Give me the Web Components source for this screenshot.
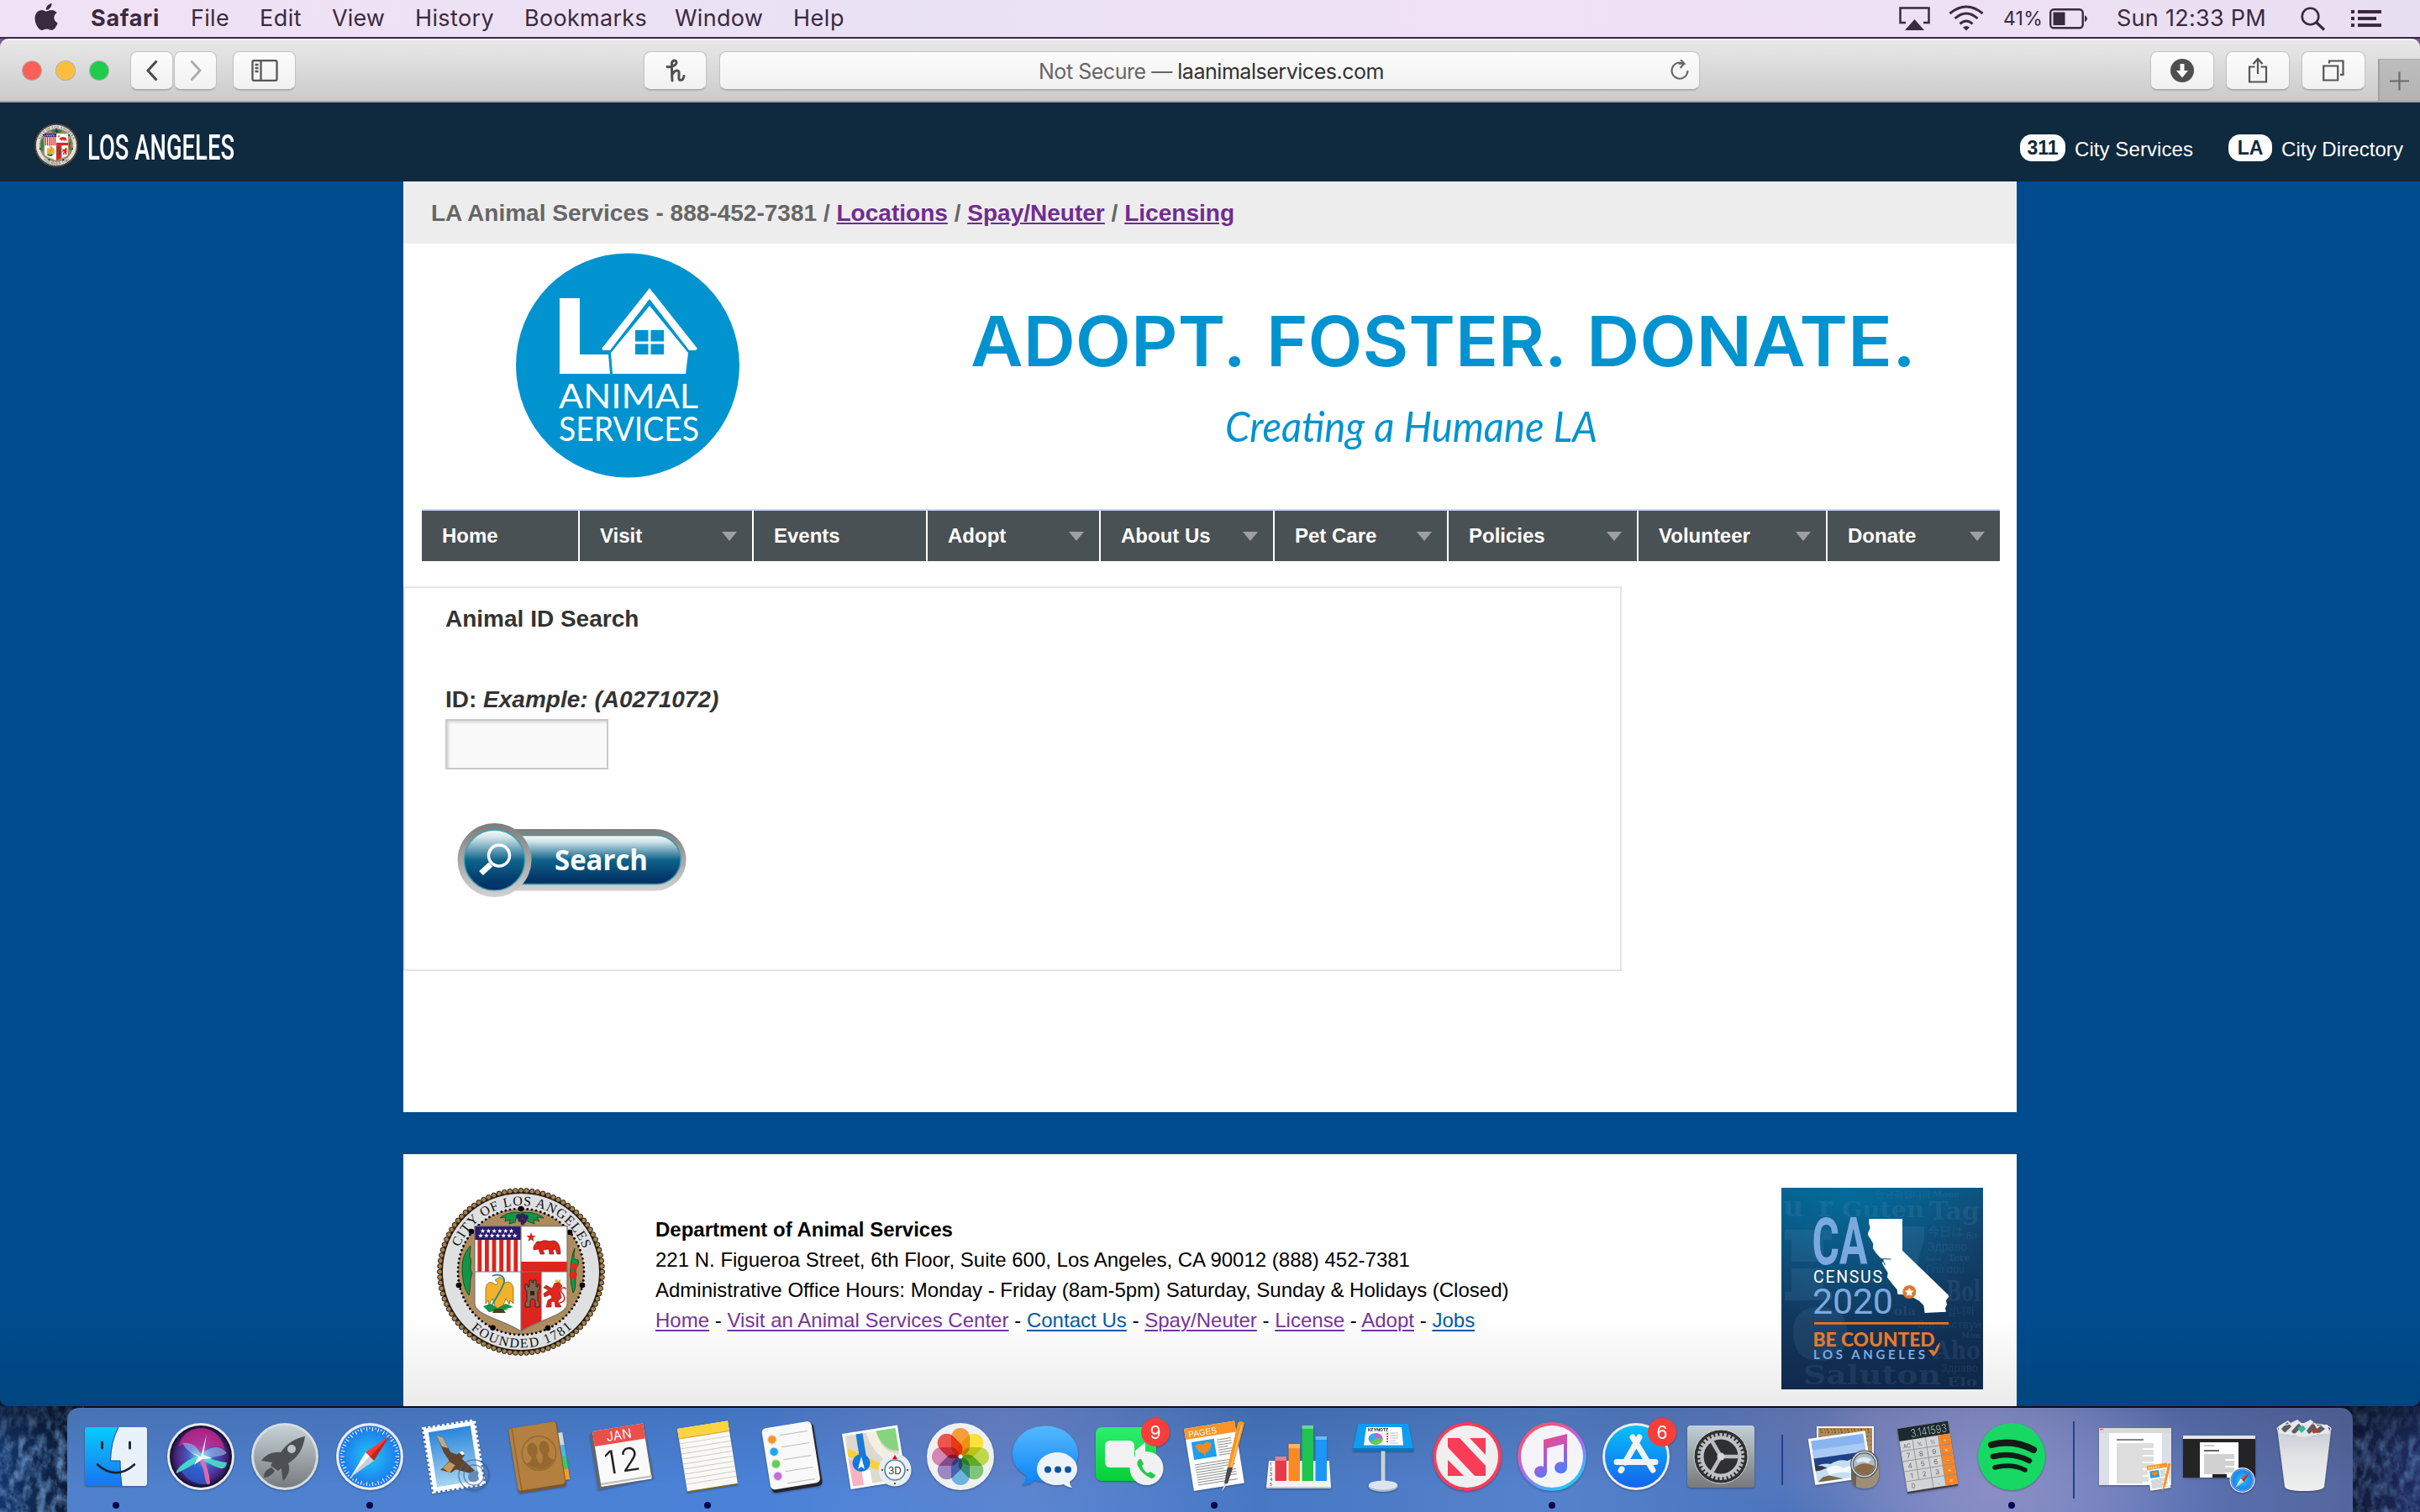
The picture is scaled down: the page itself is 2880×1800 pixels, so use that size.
<!DOCTYPE html>
<html lang="en">
<head>
<meta charset="utf-8">
<title>LA Animal Services</title>
<style>
html,body{margin:0;padding:0}
body{width:2880px;height:1800px;overflow:hidden;background:#0b1830;font-family:"Liberation Sans",Arial,sans-serif}
</style>
</head>
<body>
<mac-desktop></mac-desktop>
<script>
const define=(name,html,after)=>customElements.define(name,class extends HTMLElement{
  connectedCallback(){
    if(this.shadowRoot)return;
    this.attachShadow({mode:'open'}).innerHTML=typeof html==='function'?html(this):html;
    if(after)after(this);
  }
});

/* Text run set to an exact width, by tracking or by horizontal scale */
define('fit-text',`<style>:host{display:inline-block;white-space:pre;flex:none}span{display:inline-block;transform-origin:0 50%}</style><span><slot></slot></span>`,el=>{
  const w=+el.getAttribute('w'),s=el.shadowRoot.querySelector('span'),nat=s.getBoundingClientRect().width;
  if(el.getAttribute('mode')==='scale')s.style.transform=`scaleX(${w/nat})`;
  else s.style.letterSpacing=((w-nat)/el.textContent.length)+'px';
  el.style.width=w+'px';
});

/* ---------- City seal ---------- */
define('city-seal',()=>{
  const pt=(r,a)=>[100+r*Math.cos(a),100+r*Math.sin(a)].map(v=>v.toFixed(1));
  let beads='',dots='',stripes='',stars='';
  for(let i=0;i<92;i++){const[x,y]=pt(96.6,i*Math.PI*2/92);beads+=`<circle cx="${x}" cy="${y}" r="2.9"/>`}
  for(let i=0;i<90;i++){const[x,y]=pt(75,i*Math.PI*2/90);dots+=`<circle cx="${x}" cy="${y}" r="1.4"/>`}
  for(let i=0;i<6;i++)stripes+=`<rect x="${48.4+i*8.6}" y="62" width="4.8" height="38"/>`;
  const star=(x,y,r)=>{let p='';for(let i=0;i<10;i++){const q=i%2?r*.42:r,a=-Math.PI/2+i*Math.PI/5;p+=(x+q*Math.cos(a)).toFixed(1)+','+(y+q*Math.sin(a)).toFixed(1)+' '}return `<polygon points="${p}"/>`};
  for(let i=0;i<6;i++)stars+=star(54.5+i*6.8,51.5,3);
  for(let i=0;i<7;i++)stars+=star(52+i*6.8,57,3);
  const big=[[100,25],[41,52],[158,53],[26,116],[173,116],[66.5,166.7],[132,167]].map(([x,y])=>`<circle cx="${x}" cy="${y}" r="3.3"/>`).join('');
  return `<style>:host{display:block;flex:none}svg{display:block;width:100%;height:100%}</style>
<svg viewBox="0 0 200 200"><defs><path id="t" d="M21 100A79 79 0 0 1 179 100"/><path id="b" d="M9.500 100A90.500 90.500 0 0 0 190.500 100"/><clipPath id="s"><path d="M45 45.700H155V138C155 152 118 158 100 171C82 158 45 152 45 138Z"/></clipPath></defs>
<circle cx="100" cy="100" r="95.500" fill="#221a10"/><g fill="#a8824f" stroke="#1f1810" stroke-width="1">${beads}</g>
<circle cx="100" cy="100" r="93" fill="#dfe0e2"/><circle cx="100" cy="100" r="75" fill="#ae8b5d"/>${dots}${big}
<g fill="#149447" stroke="#0b3d20" stroke-width=".8"><path d="M75 36C82 30 92 28 100 30C108 28 120 30 127 36L119 35L122 40L115 38L116 43L108 40L106 36H94L93 41L86 43L87 38L81 40L82 35Z"/><path d="M40 69C31 78 28 92 31 108C32 118 35 124 38 128C41 118 38 110 42 102C37 95 43 88 39 82Z"/><path d="M164 72C158 86 157 108 162 125C167 118 163 112 166 103C162 96 171 92 168 86C161 86 163 80 164 72Z"/></g>
<g fill="#37226d" stroke="#160c35" stroke-width=".5"><circle cx="97" cy="34" r="2.500"/><circle cx="102" cy="33" r="2.500"/><circle cx="106" cy="35" r="2.500"/><circle cx="99" cy="38" r="2.500"/><circle cx="104" cy="39" r="2.500"/><circle cx="102" cy="42" r="2.200"/></g>
<circle cx="163" cy="94" r="4" fill="#e0261e"/><circle cx="162" cy="104" r="4.500" fill="#e0261e"/>
<g clip-path="url(#s)"><rect x="40" y="40" width="120" height="135" fill="#fff"/><rect x="45" y="45" width="55" height="17" fill="#2b1b6c"/><g fill="#dd241d">${stripes}<rect x="100" y="88" width="56" height="12"/><rect x="100" y="100" width="24.500" height="72"/></g><g fill="#fff">${stars}</g></g>
<g fill="none" stroke="#777" stroke-width="1.200"><path d="M45 45.700H155V138C155 152 118 158 100 171C82 158 45 152 45 138Z"/><path d="M100 46V170M45 100H155"/></g>
<g fill="#dd241d">${star(112,59,6)}<path stroke="#5a1512" stroke-width=".6" d="M115 70L119 64L124 64C129 61 133 65 138 63C144 63 147 69 147 79H143L141 73L138 74L139 79H134L133 73L126 74L128 79H123L121 73L115 74Z"/></g>
<path fill="#f3b229" stroke="#7a5310" stroke-width=".7" d="M69 110L75 106L80 110L79 115C84 109 90 113 91 120V138L87 134L86 139L82 132L79 140L84 145H66L69 140L66 132L62 139L61 134L58 138V120C59 112 65 110 70 116L73 113Z"/><path d="M66 105C76 101 83 107 79 115C76 123 73 126 66 139" fill="none" stroke="#1a8a98" stroke-width="1.800"/><path fill="#149447" d="M55 141L64 138L72 143L82 138L91 142L82 144L78 148L68 147L62 148Z"/><path fill="#503b1e" d="M66 149L69 144H78L82 149Z"/>
<path fill="#7d6853" stroke="#2c2118" stroke-width=".9" d="M105 142V137L107 135V123L105 121V115H108V118H110V110H113V113H115V110H118V118H120V115H122V121L120 123V135L122 137V142H117V134Q114 130 111 134V142Z"/><path d="M111 123v5h5v-5z" fill="#2c2118"/>
<path fill="#e0261e" stroke="#6c1310" stroke-width=".6" d="M140 114L145 112L149 117L146 121L148 131L144 135L148 142H141L140 135L136 136V142H130L132 134L137 131L135 127L128 130L127 126L133 122L127 119L130 116L137 120Z"/><path d="M146 137C156 135 151 127 148 124C146 119 153 117 153 121" fill="none" stroke="#e0261e" stroke-width="1.600"/><path d="M140 112l2-3 2 2 3-2v4z" fill="#e6b12e"/>
<g font-family="Liberation Serif,Times New Roman,serif" font-size="16" fill="#111"><text><textPath href="#t" startOffset="30" textLength="190" lengthAdjust="spacing">CITY OF LOS ANGELES</textPath></text><text><textPath href="#b" startOffset="77" textLength="132" lengthAdjust="spacing">FOUNDED 1781</textPath></text></g></svg>`});

/* ---------- macOS menu bar ---------- */
define('menu-bar',`<style>
:host{display:flex;box-sizing:border-box;height:46px;padding-left:41px;background:linear-gradient(90deg,#f1e1f4,#e9e2f4 38%,#f0e1f4 60%,#eee1f3 80%,#e8def2);border-bottom:2px solid #3b2545;color:#3a2a3f;font:27px/44px Inter,sans-serif}
svg{flex:none;display:block}b{font-weight:700}.sp{flex:1}fit-text{margin-right:var(--g)}
.small{font-size:23px}
</style>
<svg width="28" height="44" viewBox="0 0 28 44" style="margin-right:39px"><path fill="#3a2a3f" d="M20.500 4C20.900 8 17.500 12 13.800 11.800C13.500 8.200 16.700 4.400 20.500 4ZM14 13.600C15.500 13.600 17.800 11.800 20.700 12C23.200 12.200 25.300 13.300 26.700 15.300C21.800 18.300 22.500 25.200 27.600 27.400C26.300 31 23.600 35.700 20.700 35.800C18.400 35.900 17.500 34.400 14.600 34.400C11.700 34.400 10.800 35.800 8.600 35.900C5.500 36 .5 28.600 .5 22C.5 15.500 4.700 12.200 8.600 12.100C11 12.100 12.800 13.600 14 13.600Z"/></svg>
<fit-text w="82" style="--g:37px"><b>Safari</b></fit-text><fit-text w="46" style="--g:36px">File</fit-text><fit-text w="50" style="--g:36px">Edit</fit-text><fit-text w="63" style="--g:36px">View</fit-text><fit-text w="94" style="--g:36px">History</fit-text><fit-text w="146" style="--g:33px">Bookmarks</fit-text><fit-text w="105" style="--g:36px">Window</fit-text><fit-text w="61" style="--g:0">Help</fit-text>
<span class="sp"></span>
<svg width="37" height="44" viewBox="0 0 37 44" style="margin-right:22px"><path d="M8 27H1.500V9.500H35.500V27H29" fill="none" stroke="#3a2a3f" stroke-width="2.500"/><path d="M18.500 23L30 36H7Z" fill="#3a2a3f"/></svg>
<svg width="42" height="44" viewBox="0 0 42 44" style="margin-right:23px"><g fill="none" stroke="#3a2a3f" stroke-width="3"><path d="M1.500 16Q21 0 40.500 16M7.500 22Q21 10 34.500 22M13.500 28.500Q21 21.500 28.500 28.500"/></g><path d="M17 32.500Q21 29.500 25 32.500L21 36.500Z" fill="#3a2a3f"/></svg>
<fit-text class="small" w="47" style="--g:8px">41%</fit-text>
<svg width="46" height="44" viewBox="0 0 46 44" style="margin-right:34px"><rect x="1.200" y="11.200" width="38.500" height="22" rx="4" fill="none" stroke="#3a2a3f" stroke-width="2.400"/><path d="M4.500 14.500h14v15.500h-14z" fill="#3a2a3f"/><path d="M42 18Q48 22 42 26.500Z" fill="#3a2a3f"/></svg>
<fit-text w="178" style="--g:41px">Sun 12:33 PM</fit-text>
<svg width="30" height="44" viewBox="0 0 30 44" style="margin-right:30px"><circle cx="11.500" cy="19.500" r="9.800" fill="none" stroke="#3a2a3f" stroke-width="2.600"/><path d="M18.500 26.500L28 35.500" stroke="#3a2a3f" stroke-width="3.200"/></svg>
<svg width="36" height="44" viewBox="0 0 36 44" style="margin-right:46px"><path fill="#3a2a3f" d="M0 12h4v4H0zM8 12h28v4H8zM0 20h4v4H0zM8 20h22v4H8zM0 28h4v4H0zM8 28h28v4H8z"/></svg>`);

/* ---------- Safari toolbar ---------- */
define('tool-button',`<style>:host{display:flex;align-items:center;justify-content:center;box-sizing:border-box;height:46px;flex:none;border-radius:8px;background:linear-gradient(#fcfcfc,#f1f1f1);border:1px solid #c4c4c4;border-bottom-color:#a6a6a6;box-shadow:0 1px 1px #0002}</style><slot></slot>`);
define('browser-toolbar',`<style>
:host{display:flex;box-sizing:border-box;height:76px;padding:13px 0 0 26px;background:linear-gradient(#e8e8e8,#cbcbcb);border-top:2px solid #f4f4f4;border-bottom:2px solid #a3a3a3;border-radius:10px 10px 0 0;font:25px/44px Inter,sans-serif}
i{width:22px;height:22px;margin:11px 16px 0 0;border-radius:50%;border:1px solid #0003;flex:none;background-clip:padding-box}
svg{display:block}.addr{position:relative;color:#666}.addr b{font-weight:400;color:#333}
.reload{position:absolute;right:10px;top:9px}
.tab{width:50px;height:50px;margin:9px 0 0 15px;background:linear-gradient(#bdbdbd,#b3b3b3);border-left:2px solid #a0a0a0;border-top:1px solid #a8a8a8;box-sizing:border-box}
</style>
<i style="background-color:#ff5f57"></i><i style="background-color:#ffbf3c"></i><i style="background-color:#1fcc4c"></i>
<tool-button style="width:51px;margin-left:9px"><svg width="16" height="26"><path d="M13.500 1.500L3 13L13.500 24.500" fill="none" stroke="#4a4a4a" stroke-width="3"/></svg></tool-button>
<tool-button style="width:51px;margin-left:1px"><svg width="16" height="26"><path d="M2.500 1.500L13 13L2.500 24.500" fill="none" stroke="#ababab" stroke-width="2.800"/></svg></tool-button>
<tool-button style="width:75px;margin-left:19px"><svg width="32" height="26"><path d="M3 1.200H29Q30.500 1.200 30.500 3V23Q30.500 24.800 29 24.800H3Q1.500 24.800 1.500 23V3Q1.500 1.200 3 1.200ZM11.500 1V25M4.500 6H8.500M4.500 10H8.500M4.500 14H8.500" fill="none" stroke="#555" stroke-width="2.300"/></svg></tool-button>
<tool-button style="width:75px;margin-left:414px"><svg width="26" height="28" viewBox="0 0 26 28"><path d="M3 9.500C8 10.500 14.500 7.500 14 4C13.500 .5 8.500 1.500 8.500 6C8.500 13 8.500 19 9 26M9.500 18C12 13.500 16.500 12.500 17 16C17.500 19.500 15.500 25.500 19 25.500C21 25.500 22.500 23.500 23 20.500" fill="none" stroke="#505050" stroke-width="3" stroke-linecap="round"/></svg></tool-button>
<tool-button class="addr" style="width:1167px;margin-left:15px"><fit-text w="411" style="margin:2px 0 0 4px"><span>Not Secure — </span><b>laanimalservices.com</b></fit-text><svg class="reload" width="26" height="26"><path d="M17 4.500A9.500 9.500 0 1 0 22.500 13" fill="none" stroke="#666" stroke-width="2"/><path d="M11.500 4.800H18.500L13.500 -1M18.500 4.500L13.500 10" fill="none" stroke="#666" stroke-width="2"/></svg></tool-button>
<tool-button style="width:76px;margin-left:536px"><svg width="28" height="28"><circle cx="14" cy="14" r="14" fill="#4f4f4f"/><path d="M11.500 6h5v8h4.500L14 22.500L7 14h4.500z" fill="#fafafa"/></svg></tool-button>
<tool-button style="width:76px;margin-left:14px"><svg width="24" height="32"><path d="M8.500 11.500H2V29.500H22V11.500H15.500M12 20V3M6.500 8.200L12 2L17.500 8.200" fill="none" stroke="#555" stroke-width="2.200"/></svg></tool-button>
<tool-button style="width:76px;margin-left:14px"><svg width="26" height="26"><path d="M1.200 7.500h17v17h-17zM8 4.500V1.500H24.500V17.800H21" fill="none" stroke="#555" stroke-width="2.200"/></svg></tool-button>
<div class="tab"><svg width="48" height="49"><path d="M12 25.500H35M23.500 14.500V36.500" stroke="#6b6b6b" stroke-width="2.200"/></svg></div>`);

/* ---------- City header ---------- */
define('city-header',`<style>
:host{display:flex;height:94px;padding-left:41px;background:#0f293e;color:#fff;box-sizing:border-box;font-size:24px;line-height:32px}
city-seal{width:52px;height:52px;margin-top:25px}
.la{font:500 43px/94px Roboto,sans-serif;margin:6px 0 0 11px}
.links{margin-left:auto;display:flex;padding:38px 20px 0 0}
.badge{height:32px;border-radius:14px;background:#fff;color:#0f293e;font-weight:700;font-size:23px;text-align:center}
.t{margin:2px 42px 0 11px}.t:last-child{margin-right:0}
</style><city-seal></city-seal><fit-text class="la" w="175" mode="scale">LOS ANGELES</fit-text>
<div class="links"><span class="badge" style="width:54px">311</span><fit-text class="t" w="141">City Services</fit-text><span class="badge" style="width:52px">LA</span><fit-text class="t" w="145">City Directory</fit-text></div>`);

define('utility-bar',`<style>:host{display:block;box-sizing:border-box;height:74px;background:#ededed;color:#666;font:bold 28px/74px "Liberation Sans",Arial,sans-serif;padding:1px 0 0 33px}a{color:#702c91;text-decoration:underline}</style><fit-text w="956">LA Animal Services - 888-452-7381 / <a>Locations</a> / <a>Spay/Neuter</a> / <a>Licensing</a></fit-text>`);

define('site-banner',`<style>
:host{display:flex;height:316px;color:#0093d0}
.logo{margin:11px 0 0 134px;flex:none;display:block}
.copy{margin-left:274px;padding-top:66px}
.h{display:flex;font:600 83px/100px Inter,sans-serif}
.s{font:italic 50px/60px Lato,sans-serif;margin:21px 0 0 303px}
</style>
<svg class="logo" width="267" height="268" viewBox="0 0 267 268"><ellipse cx="133" cy="134" rx="133" ry="133.500" fill="#0093d0"/><g fill="#fff"><path d="M52 54H76V121H110L112 144H52Z"/><path d="M159 42L216 114L214 116H206L159 55L112 116H104L102 114Z"/><path d="M159 63L205 119L202 144H115L113 119Z"/></g><path fill="#0093d0" d="M142 92h15.500v13.500H142zM160.500 92H176v13.500h-15.500zM142 108.500h15.500V121H142zM160.500 108.500H176V121h-15.500z"/><g fill="#fff" font-family="Lato,sans-serif" font-size="40.500"><text x="51" y="185" textLength="166" lengthAdjust="spacingAndGlyphs">ANIMAL</text><text x="51" y="224" textLength="167" lengthAdjust="spacingAndGlyphs">SERVICES</text></g></svg>
<div class="copy"><div class="h"><fit-text w="328" mode="scale">ADOPT.</fit-text><fit-text w="358" mode="scale" style="margin-left:24px">FOSTER.</fit-text><fit-text w="392" mode="scale" style="margin-left:23px">DONATE.</fit-text></div>
<fit-text class="s" w="443" mode="scale">Creating a Humane LA</fit-text></div>`);

define('nav-item',el=>`<style>:host{display:flex;align-items:center;box-sizing:border-box;flex:none;padding:0 18px 0 24px;background:#4a5154;justify-content:space-between;color:#fff;font:bold 24px/60px "Liberation Sans",Arial,sans-serif}svg{display:block}</style><slot></slot>${el.hasAttribute('menu')?'<svg width="18" height="11"><path d="M0 0H18L9 11Z" fill="#9da0a1"/></svg>':''}`);
define('site-nav',()=>{
  const items=[['Home',186,0],['Visit',205,1],['Events',205,0],['Adopt',204,1],['About Us',205,1],['Pet Care',205,1],['Policies',224,1],['Volunteer',223,1],['Donate',205,1]];
  return `<style>:host{display:flex;gap:2px;margin:0 20px 0 22px;border-top:2px solid #c8d6f7;height:60px}</style>`+items.map(([t,w,m])=>`<nav-item style="width:${w}px"${m?' menu':''}>${t}</nav-item>`).join('');
});

define('search-button',`<style>:host{display:block;width:274px;height:90px}svg{display:block}</style><svg width="274" height="90" viewBox="0 0 274 90"><defs><linearGradient id="o" x2="0" y2="1"><stop stop-color="#7c7c7c"/><stop offset="1" stop-color="#d2d2d2"/></linearGradient><linearGradient id="i" x2="0" y2="1"><stop stop-color="#f6fbfc"/><stop offset=".12" stop-color="#d3e6ea"/><stop offset=".5" stop-color="#0f648b"/><stop offset=".85" stop-color="#033a6b"/><stop offset="1" stop-color="#022f63"/></linearGradient></defs>
<rect x="20" y="8" width="252.500" height="73.500" rx="36.500" fill="url(#o)"/><rect x="30" y="15.500" width="236" height="58" rx="29" fill="url(#i)" stroke="#3798ac" stroke-width="1.500"/><circle cx="44.500" cy="45" r="44" fill="url(#o)"/><circle cx="44.500" cy="45" r="36" fill="url(#i)" stroke="#3ba0b2" stroke-width="1.500"/><circle cx="50" cy="39.500" r="12.500" fill="none" stroke="#fff" stroke-width="3.500"/><path d="M40 50L28.500 60.500" stroke="#fff" stroke-width="7"/><text x="116" y="56.500" fill="#fff" font-family="Open Sans,sans-serif" font-weight="700" font-size="34" textLength="111" lengthAdjust="spacingAndGlyphs">Search</text></svg>`);

define('search-panel',`<style>:host{display:block;box-sizing:border-box;width:1450px;height:458px;margin-top:30px;border:2px solid #e5e5e5;padding:17px 48px;color:#333;font:bold 28px/40px "Liberation Sans",Arial,sans-serif}
h2,p{margin:0;font:inherit}p{margin-top:56px}input{display:block;box-sizing:border-box;width:194px;height:60px;margin-top:3px;border:2px solid #c9c9c9;background:#f9f9f9;border-radius:0;box-shadow:inset 2px 2px 3px #0002;outline:0}search-button{margin:63px 0 0 14px}</style>
<h2>Animal ID Search</h2><p>ID: <em>Example: (A0271072)</em></p><input><search-button></search-button>`);

define('census-card',`<style>:host{display:block;width:240px;height:240px;flex:none}svg{display:block}</style><svg width="240" height="240" viewBox="0 0 240 240"><defs><linearGradient id="g" x2=".15" y2="1"><stop stop-color="#075e8b"/><stop offset=".35" stop-color="#12436d"/><stop offset="1" stop-color="#10294b"/></linearGradient><radialGradient id="h" cx=".35" cy="0" r=".7"><stop stop-color="#0273a3" stop-opacity=".7"/><stop offset="1" stop-color="#0273a3" stop-opacity="0"/></radialGradient></defs><rect width="240" height="240" fill="url(#g)"/><rect width="240" height="240" fill="url(#h)"/>
<g fill="#7fb0d8" opacity=".11" font-family="DejaVu Serif,serif" font-weight="bold"><path d="M4 50H60V62H50V88H12V62H4ZM12 96H50V124H60V134H4V124H12ZM132 46H170V60L160 96H146L140 60ZM14 172Q14 142 46 142Q78 142 78 172Q78 206 46 206Q14 206 14 172Z"/><text x="2" y="34" font-size="34" textLength="60">ur</text><text x="72" y="35" font-size="26" textLength="98" lengthAdjust="spacingAndGlyphs">Guten</text><text x="176" y="38" font-size="29" textLength="60" lengthAdjust="spacingAndGlyphs">Tag</text><text x="180" y="11" font-size="10" textLength="32" lengthAdjust="spacingAndGlyphs">Mono</text><text x="196" y="135" font-size="34" textLength="41" lengthAdjust="spacingAndGlyphs">Bol</text><text x="134" y="152" font-size="14" textLength="26" lengthAdjust="spacingAndGlyphs">ola</text><text x="182" y="204" font-size="30" textLength="55" lengthAdjust="spacingAndGlyphs">Aho</text><text x="26" y="234" font-size="32" textLength="164" lengthAdjust="spacingAndGlyphs">Saluton</text><text x="197" y="236" font-size="14" textLength="36" lengthAdjust="spacingAndGlyphs">Elo</text><g font-weight="400" font-family="Liberation Sans,Noto Sans CJK JP,Noto Sans CJK KR,sans-serif"><text x="174" y="57" font-size="14">今日は</text><text x="220" y="61" font-size="10">Віт</text><text x="174" y="75" font-size="14">Здраво</text><text x="172" y="101" font-size="12">Γειά σου</text><text x="197" y="152" font-size="12">십니까</text><text x="162" y="167" font-size="12" textLength="76" lengthAdjust="spacingAndGlyphs">Здравствуй</text><text x="190" y="219" font-size="13">Здраво</text><text x="112" y="12" font-size="10" textLength="66" lengthAdjust="spacingAndGlyphs">안녕하십니까</text></g><text x="198" y="87" font-size="11">Tere</text><text x="172" y="87" font-size="6.500">Salut</text><text x="214" y="179" font-size="9" textLength="23" lengthAdjust="spacingAndGlyphs">Mon</text></g>
<g fill="#7ba9df"><text x="36.500" y="91" font-family="Roboto,sans-serif" font-weight="700" font-size="77" textLength="66" lengthAdjust="spacingAndGlyphs">CA</text><text x="37" y="150" font-family="Roboto,sans-serif" font-size="43" textLength="96">2020</text><text x="38" y="204" font-family="Lato,sans-serif" font-weight="700" font-size="15" textLength="133">LOS ANGELES</text></g>
<text x="38" y="113" fill="#fff" font-family="Roboto,sans-serif" font-size="19.500" textLength="82">CENSUS</text><rect x="39" y="160" width="160" height="2.700" fill="#e2782a"/><text x="37.500" y="188.500" fill="#e47a2b" font-family="Lato,sans-serif" font-weight="900" font-size="22" textLength="145" lengthAdjust="spacingAndGlyphs">BE COUNTED</text><path d="M175 193L181 193L182 196Q184 188 189 184Q187 195 181 201Z" fill="#e47a2b"/>
<g transform="scale(.3333) translate(-120 -102)"><path fill="#fff" d="M433 213H552V326L715 484L718 491L708 504L711 520L705 532L708 545L632 549L628 522L612 506L598 498L580 490L556 484L535 482L533 466L518 448L498 422L500 405L488 386L480 372L485 358L473 352L458 335L447 318L448 302L438 284L430 274L429 264L437 245L433 230Z"/><path d="M481 356l30 1M482 360l8 18" stroke="#204565" stroke-width="3"/><circle cx="577" cy="474" r="24" fill="#e2782a"/><path fill="#fff" d="M577 459l5 10 11 1-8 8 2 11-10-5-10 5 2-11-8-8 11-1z"/></g></svg>`);

define('site-footer',`<style>:host{display:flex;align-items:flex-start;box-sizing:border-box;height:300px;padding:40px 40px 0;background:linear-gradient(#fff 0,#fff 65%,#ebebeb);color:#000;font:24px/36px "Liberation Sans",Arial,sans-serif}
city-seal{width:200px;height:200px}.txt{margin:32px 0 0 60px;flex:1;white-space:nowrap}.txt div{height:36px}.lk{letter-spacing:.02px}a{color:#75359a;text-decoration:underline;text-underline-offset:3px;text-decoration-thickness:1.500px}a.n{color:#0059a8}</style>
<city-seal></city-seal><div class="txt"><div><b>Department of Animal Services</b></div><div>221 N. Figueroa Street, 6th Floor, Suite 600, Los Angeles, CA 90012 (888) 452-7381</div><div>Administrative Office Hours: Monday - Friday (8am-5pm) Saturday, Sunday &amp; Holidays (Closed)</div><div class="lk"><a>Home</a> - <a>Visit an Animal Services Center</a> - <a class="n">Contact Us</a> - <a>Spay/Neuter</a> - <a>License</a> - <a>Adopt</a> - <a class="n">Jobs</a></div></div><census-card></census-card>`);

define('web-page',`<style>:host{display:block;height:1552px;background:#004b8d;border-radius:0 0 10px 10px;overflow:hidden}main,site-footer{width:1920px;margin:0 auto}main{background:#fff;height:1108px}.gap{height:50px}.f{height:300px;background:linear-gradient(#004b8d 65%,#00457f)}</style>
<city-header></city-header><main><utility-bar></utility-bar><site-banner></site-banner><site-nav></site-nav><search-panel></search-panel></main><div class="gap"></div><div class="f"><site-footer></site-footer></div>`);

/* ---------- Dock ---------- */
const compass=(x,y,r)=>{let t='';for(let i=0;i<60;i++){const a=i*Math.PI/30,q=i%2?.82:.76;t+=`M${(x+r*.88*Math.cos(a)).toFixed(1)} ${(y+r*.88*Math.sin(a)).toFixed(1)}L${(x+r*q*Math.cos(a)).toFixed(1)} ${(y+r*q*Math.sin(a)).toFixed(1)}`}
return `<circle cx="${x}" cy="${y}" r="${r}" fill="#ececec"/><circle cx="${x}" cy="${y}" r="${r*.92}" fill="url(#sf)"/><path d="${t}" stroke="#fff" stroke-width="${r/38}"/><g transform="translate(${x} ${y}) scale(${r/40})"><path d="M24-25L-5-5L0 0Z" fill="#ff3b30"/><path d="M24-25L5 5L0 0Z" fill="#c9201b"/><path d="M-23 25L-5-5L0 0Z" fill="#fff"/><path d="M-23 25L5 5L0 0Z" fill="#c9cfd3"/></g>`};
const lines=(x,y,w,n,s,c,sw)=>{let d='';for(let i=0;i<n;i++)d+=`M${x} ${y+i*s}h${(i%4==3?w*.7:w)}`;return `<path d="${d}" stroke="${c}" stroke-width="${sw}"/>`};
const skew=(h,x=14,y=25)=>`<g transform="matrix(1 -.16 .16 1 ${x} ${y})">${h}</g>`;
const miniPages=`<rect width="60" height="74" fill="#fff"/><rect width="60" height="13" fill="#fb9427"/><text x="4" y="11" font-size="10" fill="#fff" font-family="Liberation Sans,sans-serif">PAGES</text><rect x="6" y="17" width="27" height="21" fill="#1ba0ee"/><path d="M10 22Q14 18 19 22Q24 17 29 22Q27 31 21 32L20 37L18 32Q12 30 10 22Z" fill="#f4881d"/>${lines(36,19,17,7,3,'#8b8b8b',1)}${lines(6,44,47,9,3,'#8b8b8b',1)}`;
const petals=['#f78f1e','#f9e01d','#b5d334','#6bbd6a','#5aa9de','#8d76bb','#ce76a8','#ee3b30'].map((c,i)=>`<rect x="39" y="24" width="22" height="33" rx="11" fill="${c}" opacity=".86" style="mix-blend-mode:multiply" transform="rotate(${i*45} 50 58)"/>`).join('');
const teeth=(()=>{let s='';for(let i=0;i<32;i++)s+=`<rect x="48.400" y="30" width="3.200" height="7" transform="rotate(${i*11.25} 50 58)"/>`;return s})();
const badge=(n,x,y)=>`<circle cx="${x}" cy="${y}" r="17" fill="#fa3d38"/><text x="${x}" y="${y+7.500}" font-size="21" text-anchor="middle" fill="#fff" font-family="Inter,sans-serif">${n}</text>`;
const calc=(()=>{let s='<rect y="1" width="60" height="76" fill="#3a3d42"/><rect width="60" height="75" fill="#d3d4d6"/><rect width="60" height="15" fill="#1b2a2e"/><text x="57.500" y="12.500" text-anchor="end" font-size="13" textLength="43" lengthAdjust="spacingAndGlyphs" fill="#b4bcbc" font-family="Inter,sans-serif" font-weight="300">3.141593</text><rect x="46" y="15" width="14" height="60" fill="#fb8524"/><path d="M0 27h60M0 39h60M0 51h60M0 63h60M15.500 15v48M31 15v60M46 15v60" stroke="#8c8e90" stroke-width=".8"/>';
const k=[['AC','%','%','÷'],['7','8','9','×'],['4','5','6','−'],['1','2','3','+'],['0','','.','=']];
k.forEach((r,j)=>r.forEach((t,i)=>{if(t)s+=`<text x="${[8,23,38.500,53][i]}" y="${24+j*12}" font-size="${j?8:6.5}" text-anchor="middle" fill="${i==3?'#ffe0c0':'#6a6a6c'}" font-family="Inter,sans-serif">${t}</text>`}));return s})();
const ICONS={
finder:`<rect x="13" y="23" width="74" height="70" rx="3" fill="url(#fb)"/><path d="M53 23H84Q87 23 87 26V90Q87 93 84 93H57Q55 80 55 63H43.500Q44 40 53 23Z" fill="#e9f1fa"/><path d="M53 23Q44 40 43.500 63H55Q55 80 57 93" fill="none" stroke="#15508f" stroke-width="1"/><path d="M33.500 41v7M66.500 41v7" stroke="#1a2a40" stroke-width="3" stroke-linecap="round"/><path d="M28 67.500Q50 87 72 67.500" fill="none" stroke="#1a2230" stroke-width="2.600" stroke-linecap="round"/>`,
siri:`<circle cx="50" cy="58" r="40" fill="#e9e9ee"/><circle cx="50" cy="58" r="37" fill="#15122f"/><circle cx="50" cy="58" r="35" fill="url(#si)"/><path d="M23 46Q30 24 52 24Q72 26 79 50Q66 40 50 54Q36 38 23 46Z" fill="#d6278a" opacity=".7"/><path d="M24 70Q34 62 50 60Q52 78 58 91Q34 92 24 70Z" fill="#2467d8" opacity=".7"/><path d="M50 56Q44 40 28 42Q34 54 50 58Q72 60 81 54Q72 42 58 50Z" fill="#a8c6f4" opacity=".55"/><path d="M50 55Q60 62 81 65Q80 75 70 71Q58 66 51 61Q38 70 21 78Q19 74 34 63Q44 58 50 55Z" fill="#4ceacb" opacity=".85"/><path d="M51 58Q60 72 61 90Q57 94 55 84Q53 70 48 62Z" fill="#f06cb4" opacity=".9"/><path d="M50 58L57 31L53 56L64 60L52 61L42 68L47 58L36 52Z" fill="#fff" opacity=".95"/>`,
launchpad:`<circle cx="50" cy="58" r="40" fill="#d7dde0"/><circle cx="50" cy="58" r="37" fill="url(#lp)"/><path d="M74 34C62 36 52 43 45 53C35 52 27 56 22 63L35 65L33 69L42 75L46 72C46 78 47 83 48 87C54 81 57 73 54 66C66 59 72 48 74 34Z" fill="#4c4f54"/><circle cx="58" cy="49" r="5" fill="#bcc4c8"/><path d="M34 71Q25 74 25 83Q34 82 38 75Z" fill="#4c4f54"/>`,
safari:compass(50,58,40),
mail:skew(`<rect width="60" height="75" fill="#fff"/><rect width="60" height="75" fill="none" stroke="#fff" stroke-width="4" stroke-dasharray="3 2.500"/><rect x="5" y="5" width="50" height="65" fill="url(#ml)"/><path d="M14 10L21 14L27 32L34 36L40 33L43 38L39 42L52 58L45 60L30 53L24 56L12 51L24 42L19 31Z" fill="#60452c"/><path d="M14 10L21 14L25 27L18 24Z" fill="#b9aa93"/><path d="M15 49l9-6 6 5-8 8z" fill="#c99a5e"/><path d="M37 34l4-1 2 4-3 1z" fill="#fff"/>`)+`<g fill="none" stroke="#40608f" opacity=".65"><circle cx="74" cy="80" r="18" stroke-width="1.500"/><circle cx="74" cy="80" r="12" stroke-width="1.500"/></g><path d="M74 76q5-3 6 2-3 3 0 6-4 6-7 4-5 1-6-6 1-7 7-6z" fill="#4a6f9f" opacity=".7"/>`,
contacts:`<g transform="matrix(1 -.16 .16 1 14 25)"><rect x="52" y="14" width="10" height="15" fill="#d2d6dc"/><rect x="52" y="29" width="10" height="14" fill="#4cb6e4"/><rect x="52" y="43" width="10" height="14" fill="#3ccb5a"/><rect x="52" y="57" width="10" height="13" fill="#f7a024"/><rect width="57" height="77" rx="3" fill="#7e5528"/><rect width="56" height="74" rx="3" fill="#b3803f"/><path d="M4 0V74" stroke="#93662f" stroke-width="1.500"/><circle cx="31" cy="34" r="20" fill="none" stroke="#94682f" stroke-width="1.500"/><g fill="#94682f"><ellipse cx="24" cy="29" rx="6" ry="8.500"/><ellipse cx="38" cy="29" rx="6" ry="8.500"/><path d="M15 44Q22 42 22 36H27Q27 42 31 47Q35 42 35 36H41Q41 42 47 44Q42 52 31 53Q20 52 15 44Z"/></g></g>`,
calendar:`<path d="M11 31L75 20L87 84L21 98Z" fill="#60666e"/>`+skew(`<rect width="60" height="66" fill="#fafafa"/><rect width="60" height="18" fill="#e9504b"/><text x="30" y="14.500" font-size="15" text-anchor="middle" fill="#fff" font-family="Inter,sans-serif">JAN</text><text x="29" y="53" font-size="38" font-weight="300" text-anchor="middle" fill="#222" textLength="42" font-family="Inter,sans-serif">12</text><path d="M0 63h61" stroke="#bbb" stroke-width="2"/>`,14,28),
notes:skew(`<rect width="60" height="75" fill="#faf9f5"/><rect width="60" height="12" fill="#ffd43f"/><path d="M0 12h60" stroke="#c4a53a"/>${lines(0,18,60,1,6,'#cfcdc8',.8)}<path d="M0 24h60M0 30h60M0 36h60M0 42h60M0 48h60M0 54h60M0 60h60M0 66h60" stroke="#c9c8c5" stroke-width=".9"/><path d="M0 75h60" stroke="#7f6a20" stroke-width="1.500"/>`),
reminders:skew(`<rect x="1" y="2" width="60" height="75" rx="5" fill="#23262b"/><rect width="59" height="73" rx="5" fill="#f9f9fa"/><path d="M20 11h33M20 25h33M20 40h33M20 54h33M20 68h33" stroke="#bbb"/>${['#fb9424','#18a8f4','#5cd24e','#c86bdd'].map((c,i)=>`<circle cx="10.500" cy="${14.500+i*14.500}" r="6" fill="#e3e3e3"/><circle cx="10.500" cy="${14.500+i*14.500}" r="4.600" fill="${c}"/>`).join('')}`),
maps:`<g transform="matrix(1 -.16 .16 1 9 31)"><rect width="66" height="66" fill="#fff"/><rect x="3" y="3" width="60" height="60" fill="#ddd9ce"/><path d="M40 3H63V30Q44 28 40 3Z" fill="#86d47e"/><path d="M28 3H40Q42 30 63 34V46Q34 40 28 3Z" fill="#f3efe4"/><path d="M3 17L63 58V63H55L3 27Z" fill="#ffcf3a"/><path d="M3 30L16 40V63H3Z" fill="#f7b3c1"/><path d="M16 40L26 48V63H16Z" fill="#fff"/><path d="M16 3h8v38h-8z" fill="#1a78d8"/></g><circle cx="32" cy="65.500" r="10.500" fill="#0f79dd"/><path d="M32 58L36 73L32 70L28 73Z" fill="#fff"/><circle cx="72" cy="74" r="19.500" fill="#e9edf1"/><circle cx="72" cy="74" r="12" fill="#f6f8fa" stroke="#4c8298" stroke-width="1.600"/><text x="72" y="78.500" font-size="12" text-anchor="middle" fill="#333" font-family="Inter,sans-serif">3D</text><path d="M72 56l3 5h-6z" fill="#d11"/><path d="M56 74h2M86 74h2M72 89v2" stroke="#222" stroke-width="1.500"/>`,
photos:`<circle cx="50" cy="58" r="40" fill="#eff0f0"/><g style="isolation:isolate">${petals}</g><circle cx="50" cy="58" r="2.500" fill="#fff"/>`,
messages:`<path d="M50 21.500C72 21.500 89 36 89 55C89 73 72 88 50 88Q43 88 37 86Q31 92 22 92Q28 87 28 81Q11 71 11 55C11 36 28 21.500 50 21.500Z" fill="url(#ms)"/><path d="M64 53C77 53 88 62 88 73Q88 82 79 88Q79 92 82 95Q75 94 72 91Q68 92 64 92C51 92 40 84 40 73C40 62 51 53 64 53Z" fill="#edf3fb"/><g fill="#0e57a5"><circle cx="53" cy="73.500" r="4"/><circle cx="65" cy="73.500" r="4"/><circle cx="77" cy="73.500" r="4"/></g>`,
facetime:`<rect x="10" y="23" width="72" height="64" rx="7" fill="url(#ft)"/><rect x="21" y="39" width="35" height="32" rx="6" fill="#f2f2f2"/><path d="M57 51L69 41V69L57 59Z" fill="#f2f2f2"/><circle cx="70.500" cy="72" r="20" fill="#f1f1f1"/><path d="M62 61Q58 64 60 69Q65 79 76 84Q80 84 81 80L75 76L72 78Q67 75 65 69L67 67L64 61Z" fill="#21cc4a"/>${badge(9,81,29)}`,
pages:skew(miniPages)+`<path d="M78 18Q82 14 86 18L71 75H65Z" fill="#f79522"/><path d="M65 75L66 71H72L71 75L66 90H62Z" fill="#46494f"/><path d="M62 90H66L59 100Z" fill="#cfd4d9"/><path d="M83 20L70 70" stroke="#ffc26c" stroke-width="1.500"/>`,
numbers:`<path d="M15 63H87L89 94H12Z" fill="#f4f4f4"/><path d="M12 94h77v2H12z" fill="#c7c7c7"/><g font-size="5" fill="#444" font-family="Inter,sans-serif"><text x="16" y="69">1</text><text x="16" y="75">2</text><text x="16" y="81">3</text><text x="16" y="87">4</text><text x="16" y="93">5</text></g><rect x="22.500" y="58" width="13.500" height="29" rx="1" fill="#e93a4c"/><rect x="38.500" y="43" width="13.500" height="44" rx="1" fill="#fa8b22"/><rect x="54.500" y="21" width="13.500" height="66" rx="1" fill="#1fc44c"/><rect x="70.500" y="34" width="13.500" height="53" rx="1" fill="#1c97f4"/><g fill="#fff" opacity=".35"><path d="M22.500 58H36v5H22.500zM38.500 43H52v5H38.500zM54.500 21H68v4H54.500zM70.500 34H84v4H70.500z"/></g>`,
keynote:`<path d="M47.500 51h5v42h-5z" fill="#c9d1d8"/><ellipse cx="50" cy="93.500" rx="17.500" ry="6.500" fill="#aab8c7"/><ellipse cx="50" cy="92" rx="17" ry="5.500" fill="#dce5ed"/><path d="M20.500 19H80L86 48H14Z" fill="#129cef"/><path d="M14 48H86V51.500H14Z" fill="#0a76c2"/><path d="M30 23H72L74 44.500H27Z" fill="#fff"/><text x="32" y="28" font-size="5" font-weight="700" fill="#222" font-family="Inter,sans-serif">KEYNOTE</text><ellipse cx="41" cy="36.500" rx="8.500" ry="6.500" fill="#36a8ec"/><path d="M41 36.500V30A8.500 6.500 0 0 1 49.500 36.500Z" fill="#d65ad6"/><path d="M41 36.500H49.500A8.500 6.500 0 0 1 34 41Z" fill="#6bc94b"/>${lines(58,30,10,5,3,'#bbb',1)}<path d="M55 30v2m0 1v2m0 1v2m0 1v2" stroke="#e8552d" stroke-width="2"/>`,
news:`<circle cx="50" cy="58" r="41" fill="#fa3c58"/><circle cx="50" cy="58" r="37" fill="#f0f0f1"/><path fill="#fa3c58" d="M27 36H41L72 69V81H59L27 47ZM53 36H72V56ZM27 62V81H46Z"/>`,
itunes:`<circle cx="50" cy="58" r="41" fill="url(#it)"/><circle cx="50" cy="58" r="37" fill="#f5f4f8"/><path d="M40 38L68 31V71A7.500 7 0 1 1 64 65V43L44 48V76A7.500 7 0 1 1 40 70Z" fill="url(#nt)"/>`,
appstore:`<circle cx="50" cy="58" r="40" fill="#ececec"/><circle cx="50" cy="58" r="37" fill="url(#ap)"/><g stroke="#f3f3f3" stroke-width="7" stroke-linecap="round"><path d="M54 35L37 65M46 35L70 74M27 64.500H73M33 73L32 74.500"/></g>${badge(6,81,29)}`,
prefs:`<rect x="10" y="21" width="80" height="74" rx="4" fill="url(#pf)"/><circle cx="50" cy="58" r="32" fill="#303030" stroke="#cfd6da"/><g fill="#b8bcbf">${teeth}</g><circle cx="50" cy="58" r="22.500" fill="none" stroke="#bfc3c6" stroke-width="4"/><path d="M50 58H72M50 58L39 39M50 58L39 77" stroke="#b9bdc0" stroke-width="4.500"/><circle cx="50" cy="58" r="4.500" fill="#d5d8da"/>`,
preview:`<path d="M19 22H87V70H19Z" fill="#f4f4f4"/><path d="M21 24H85V68H21Z" fill="#a98a58"/><path d="M23 26h60M24 29h58M78 34h6M78 39h6M78 44h6" stroke="#6f5430" stroke-width="1.500" stroke-dasharray="2 3 1 2"/><g transform="matrix(1 -.143 .156 1 8.700 37)"><rect width="68" height="55" fill="#fafafa"/><path d="M3 3H65V24H3Z" fill="#8ab4ef"/><path d="M3 14H65V24H3Z" fill="#a9caf4"/><path d="M3 24H65V35H3Z" fill="#1f3f86"/><path d="M3 34Q12 30 22 33Q32 28 42 32Q54 28 65 31V52H3Z" fill="#c6dff0"/><path d="M16 38Q28 32 36 40Q46 36 56 42L48 48Q30 42 18 46Z" fill="#f4f9fc"/><path d="M3 32L12 34L17 37L8 39H3Z" fill="#2f3a4e"/><path d="M4 52L10 47L18 46L28 50L34 52Z" fill="#7d684c"/></g><path d="M60 67V84Q61 96 76 96Q91 96 93 82V64Z" fill="#9c8f7a"/><path d="M60 67V84Q61 92 66 94V70Z" fill="#6c6252"/><circle cx="75.700" cy="67" r="16.500" fill="#3c3c3e"/><circle cx="75.700" cy="67" r="14.600" fill="none" stroke="#d2d4d8" stroke-width="1.800"/><circle cx="75.700" cy="67" r="12.800" fill="#a9bccb"/><path d="M64 71Q75 62 88 70Q84 79.500 76 79.500Q67 79 64 71Z" fill="#8a6a45"/><path d="M66 62Q74 56 84 61L80 66Q73 62 68 66Z" fill="#eef4f8" opacity=".8"/>`,
calculator:skew(calc),
spotify:`<circle cx="50" cy="58" r="40" fill="#16d863"/><g fill="none" stroke="#141a16" stroke-linecap="round"><path d="M26 44Q52 37 76 50" stroke-width="8"/><path d="M28 58Q51 52 71 63" stroke-width="6.500"/><path d="M30 71Q50 66 66 74" stroke-width="5.500"/></g>`,
doc:`<path d="M7 24H93V92H7Z" fill="#dcdfe6"/><path d="M7 24H93V30H7Z" fill="#d9d9d9"/><path d="M8 25.500h4" stroke="#e55" stroke-width="1.500"/><path d="M19 30H82V92H19Z" fill="#fff"/>${lines(28,38,32,1,2,'#333',1.2)}${lines(28,43,44,24,2,'#aaa',.8)}<g transform="translate(58 62) scale(.4)">${skew(miniPages,14,18)}<path d="M78 12Q82 8 86 12L71 75L60 96L65 70Z" fill="#f79522"/></g>`,
window:`<path d="M7 33H93V83H7Z" fill="#242424"/><path d="M7 33H93V37H7Z" fill="#e5e5e5"/><path d="M27 41H73V83H27Z" fill="#fff"/><path d="M32 51h18" stroke="#333" stroke-width="1.500"/>${lines(32,45,12,1,2,'#999',1)}${lines(32,56,36,12,2,'#999',.9)}<rect x="42" y="79" width="17" height="4" fill="#222"/>${compass(77.500,86,15)}`,
trash:`<path d="M20 22L24 19L31 15L34 18L42 14L48 19L58 14L66 21L78 20L81 31L50 35L19 31Z" fill="#e4e6e8"/><path d="M30 17l5 5-8 8-4-5zM44 18l3 5-9 9-3-4zM61 17l3 6-8 9-3-5zM70 21l5 4-9 7-3-5z" fill="#5b5d61"/><path d="M42 24l7-3 3 4-5 5z" fill="#2fb7a0"/><path d="M58 25l6-2 4 5-7 3z" fill="#a7432f"/><path d="M18 24Q19 31 27 32Q50 36 73 32Q81 31 82.500 24L74 94Q72 99 50 99Q29 99 27 94Z" fill="url(#tr)"/><ellipse cx="50" cy="25" rx="32" ry="6.500" fill="none" stroke="#e9eaec" stroke-width="1.200"/>`
};
const DEFS=`<defs><linearGradient id="fb" x2="0" y2="1"><stop stop-color="#07ccfb"/><stop offset="1" stop-color="#1a73f0"/></linearGradient><radialGradient id="si"><stop stop-color="#8ff0f4"/><stop offset=".4" stop-color="#425fc4"/><stop offset=".8" stop-color="#4c2a86"/><stop offset="1" stop-color="#231648"/></radialGradient><linearGradient id="lp" x2="0" y2="1"><stop stop-color="#c6d1d7"/><stop offset="1" stop-color="#777c7f"/></linearGradient><radialGradient id="sf"><stop stop-color="#21c7f8"/><stop offset="1" stop-color="#1b75ed"/></radialGradient><linearGradient id="ml" x2="0" y2="1"><stop stop-color="#2b86d9"/><stop offset="1" stop-color="#a5d4f2"/></linearGradient><linearGradient id="ms" x2="0" y2="1"><stop stop-color="#54b8fc"/><stop offset="1" stop-color="#0a83fa"/></linearGradient><linearGradient id="ft" x2="0" y2="1"><stop stop-color="#2cee6d"/><stop offset="1" stop-color="#06cf38"/></linearGradient><linearGradient id="it" x2=".6" y2="1"><stop stop-color="#fb5c56"/><stop offset=".25" stop-color="#f2557c"/><stop offset=".6" stop-color="#a66cf4"/><stop offset="1" stop-color="#25c6fb"/></linearGradient><linearGradient id="nt" x2=".4" y2="1"><stop stop-color="#f84f63"/><stop offset=".5" stop-color="#c653c0"/><stop offset="1" stop-color="#4f7bfa"/></linearGradient><linearGradient id="ap" x2="0" y2="1"><stop stop-color="#06c0fb"/><stop offset="1" stop-color="#1464ed"/></linearGradient><linearGradient id="pf" x2="0" y2="1"><stop stop-color="#c2d0d7"/><stop offset="1" stop-color="#77797a"/></linearGradient><linearGradient id="tr" x2="0" y2="1"><stop stop-color="#d9dde3" stop-opacity=".88"/><stop offset=".4" stop-color="#dfe1e4"/><stop offset="1" stop-color="#efefef"/></linearGradient></defs>`;
define('dock-icon',el=>`<style>:host{display:block;width:100.500px;height:124px;flex:none}svg{display:block;overflow:visible}.i{filter:drop-shadow(0 1px 1px #0005)}</style><svg width="100.500" height="124" viewBox="0 0 100.500 124">${DEFS}<g class="i">${ICONS[el.getAttribute('name')]}</g>${el.hasAttribute('running')?'<circle cx="50" cy="116" r="4" fill="#05054d"/>':''}</svg>`);
define('mac-dock',()=>{
  const on=new Set(['finder','safari','notes','pages','itunes','spotify']);
  const ic=s=>s.split(' ').map(n=>`<dock-icon name="${n}"${on.has(n)?' running':''}></dock-icon>`).join('');
  return `<style>:host{display:flex;box-sizing:border-box;width:2720px;height:124px;margin:2px auto 0;padding-left:8px;border-radius:14px 14px 0 0;background:radial-gradient(260px 160px at 84.500% 80%,#8a8ec4 0,#8a8ec400),radial-gradient(300px 120px at 79% 10%,#8d85b280,#8d85b200),radial-gradient(300px 120px at 41% 10%,#6f7ab880,#6f7ab800),linear-gradient(#0000001c,#0000 75%),linear-gradient(90deg,#5080ca,#4a82d8 30%,#5a86d2 42%,#4878c4 52%,#5582cc 65%,#4a72bb 77%,#7285c4 84%,#5a72b4 92%,#54669d)}
  .sep{width:45px;display:flex;justify-content:center;flex:none}.sep:after{content:"";width:2px;background:#23428a;margin:32px 0}.sep.t{width:46px}.sep.t:after{margin:16px 0}</style>`
  +ic('finder siri launchpad safari mail contacts calendar notes reminders maps photos messages facetime pages numbers keynote news itunes appstore prefs')+'<span class="sep"></span>'+ic('preview calculator spotify')+'<span class="sep t"></span>'+ic('doc window trash');
});

define('mac-desktop',`<style>:host{display:grid;width:2880px;height:1800px;background:#0b1733}:host>*{grid-area:1/1}.wall{display:block;align-self:end}.top{align-self:start;height:90px;background:#7d5a92}.screen{display:flex;flex-direction:column}</style>
<div class="top"></div>
<svg class="wall" width="2880" height="136"><defs><filter id="n" x="0" y="0" width="100%" height="100%"><feTurbulence type="fractalNoise" baseFrequency=".09 .06" numOctaves="4" seed="4"/><feColorMatrix values="0 0 0 0 .17  0 0 0 0 .33  0 0 0 0 .62  1.600 1.600 0 0 -1.300"/></filter><linearGradient id="w"><stop stop-color="#14366b"/><stop offset=".04" stop-color="#081020"/><stop offset=".96" stop-color="#0a0f22"/><stop offset="1" stop-color="#1f2e63"/></linearGradient><linearGradient id="v" x2="0" y2="1"><stop stop-color="#050c1c" stop-opacity=".7"/><stop offset=".45" stop-color="#050c1c" stop-opacity="0"/></linearGradient></defs><rect width="2880" height="136" fill="url(#w)"/><rect y="10" width="100" height="126" filter="url(#n)" opacity=".8"/><rect x="2780" y="10" width="100" height="126" filter="url(#n)" opacity=".5"/><rect width="2880" height="136" fill="url(#v)"/></svg>
<div class="screen"><menu-bar></menu-bar><browser-toolbar></browser-toolbar><web-page></web-page><mac-dock></mac-dock></div>`);
</script>
</body>
</html>
